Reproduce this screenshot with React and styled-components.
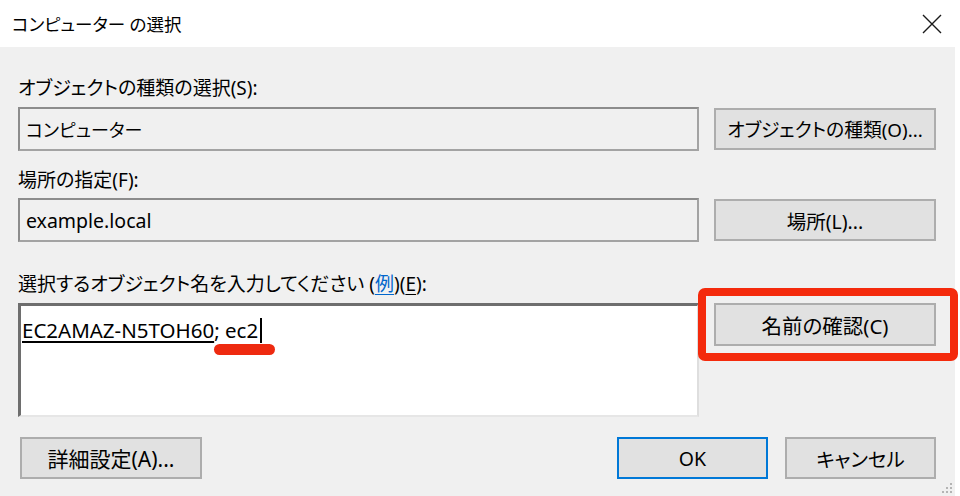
import React from 'react';
import styled, { createGlobalStyle } from 'styled-components';

const GlobalStyle = createGlobalStyle`
  html, body {
    margin: 0;
    padding: 0;
    background: #ffffff;
  }
  body {
    font-family: "Noto Sans", "Noto Sans CJK JP", sans-serif;
    font-feature-settings: "palt";
    color: #000;
  }
`;

const Window = styled.div`
  width: 960px;
  height: 496px;
  background: #ffffff;
  overflow: hidden;
  display: flex;
  flex-direction: column;
`;

const TitleBar = styled.div`
  height: 47px;
  display: flex;
  align-items: center;
  justify-content: space-between;
  padding: 0 16px 0 12px;
  flex-shrink: 0;
`;

const Title = styled.span`
  font-size: 17.5px;
`;

const CloseButton = styled.div`
  width: 24px;
  height: 24px;
  display: flex;
  align-items: center;
  justify-content: center;
`;

const Body = styled.div`
  position: relative;
  width: 955px;
  flex: 1;
  box-sizing: border-box;
  background: #f0f0f0;
  padding: 0 19px 0 18px;
  display: flex;
  flex-direction: column;
`;

const Label = styled.div`
  height: 24px;
  line-height: 24px;
  font-size: 19px;
  margin-top: ${(p) => p.$top}px;
  white-space: nowrap;
`;

const Row = styled.div`
  display: grid;
  grid-template-columns: 681px 222px;
  column-gap: 15px;
  align-items: ${(p) => (p.$top ? 'start' : 'center')};
  margin-top: ${(p) => p.$gap}px;
`;

const ReadOnlyBox = styled.div`
  height: 44px;
  box-sizing: border-box;
  border: 2px solid #a3a3a3;
  border-top-color: #8c8c8c;
  border-left-color: #8c8c8c;
  background: #f0f0f0;
  padding: 0 6px;
  display: flex;
  align-items: center;
  font-size: ${(p) => p.$size || 19.5}px;
`;

const EntryBox = styled.div`
  position: relative;
  height: 114px;
  box-sizing: border-box;
  border-style: solid;
  border-width: 3px 2px 2px 3px;
  border-color: #6e6e6e #dedede #e6e6e6 #6e6e6e;
  background: #ffffff;
  padding: 12px 1px 0;
  font-size: 20.5px;
  line-height: 24px;
`;

const Resolved = styled.span`
  text-decoration: underline;
  text-decoration-thickness: 2px;
  text-underline-offset: 3px;
`;

const Caret = styled.span`
  display: inline-block;
  width: 2px;
  height: 25px;
  background: #000;
  vertical-align: -5px;
  margin-left: 2px;
`;

const Squiggle = styled.div`
  position: absolute;
  left: 193px;
  top: 38px;
  width: 61px;
  height: 11px;
  border-radius: 6px;
  background: #ee2a10;
`;

const Button = styled.div`
  height: ${(p) => p.$h || 42}px;
  width: ${(p) => (p.$w ? `${p.$w}px` : 'auto')};
  box-sizing: border-box;
  border: 2px solid ${(p) => (p.$default ? '#0078d7' : '#adadad')};
  background: #e1e1e1;
  display: flex;
  align-items: center;
  justify-content: center;
  font-size: ${(p) => p.$size || 19.5}px;
  white-space: nowrap;
`;

const Highlight = styled.div`
  position: relative;
`;

const HighlightFrame = styled.div`
  position: absolute;
  top: -15px;
  left: -16px;
  right: -22px;
  bottom: -15px;
  border: 8px solid #f42a0c;
  border-radius: 7px;
  pointer-events: none;
`;

const Link = styled.span`
  color: #0066cc;
  text-decoration: underline;
  text-underline-offset: 3px;
`;

const Key = styled.span`
  text-decoration: underline;
  text-underline-offset: 3px;
`;

const Footer = styled.div`
  display: flex;
  align-items: center;
  margin-top: 20px;
  padding-left: 2px;
`;

const FooterRight = styled.div`
  margin-left: auto;
  display: flex;
  gap: 17px;
`;

const Grip = styled.svg`
  position: absolute;
  right: 2px;
  bottom: 2px;
`;

export default function App() {
  return (
    <>
      <GlobalStyle />
      <Window>
        <TitleBar>
          <Title>コンピューター の選択</Title>
          <CloseButton>
            <svg width="20" height="20" viewBox="0 0 20 20">
              <path d="M1 1 L19 19 M19 1 L1 19" stroke="#1a1a1a" strokeWidth="1.4" />
            </svg>
          </CloseButton>
        </TitleBar>
        <Body>
          <Label $top={29}>オブジェクトの種類の選択(S):</Label>
          <Row $gap={7}>
            <ReadOnlyBox $size={18}>コンピューター</ReadOnlyBox>
            <Button $size={18.8}>オブジェクトの種類(O)...</Button>
          </Row>

          <Label $top={17}>場所の指定(F):</Label>
          <Row $gap={6}>
            <ReadOnlyBox>example.local</ReadOnlyBox>
            <Button>場所(L)...</Button>
          </Row>

          <Label $top={30}>
            選択するオブジェクト名を入力してください (<Link>例</Link>)(<Key>E</Key>):
          </Label>
          <Row $gap={7} $top>
            <EntryBox>
              <Resolved>EC2AMAZ-N5TOH60</Resolved>; ec2<Caret />
              <Squiggle />
            </EntryBox>
            <Highlight>
              <Button $h={43} $size={20.5}>名前の確認(C)</Button>
              <HighlightFrame />
            </Highlight>
          </Row>

          <Footer>
            <Button $w={182} $size={21}>詳細設定(A)...</Button>
            <FooterRight>
              <Button $w={151} $default>OK</Button>
              <Button $w={151}>キャンセル</Button>
            </FooterRight>
          </Footer>

          <Grip width="12" height="12" viewBox="0 0 12 12">
            <g fill="#b4b4b4">
              <rect x="9" y="1" width="2" height="2" />
              <rect x="5" y="5" width="2" height="2" />
              <rect x="9" y="5" width="2" height="2" />
              <rect x="1" y="9" width="2" height="2" />
              <rect x="5" y="9" width="2" height="2" />
              <rect x="9" y="9" width="2" height="2" />
            </g>
          </Grip>
        </Body>
      </Window>
    </>
  );
}
